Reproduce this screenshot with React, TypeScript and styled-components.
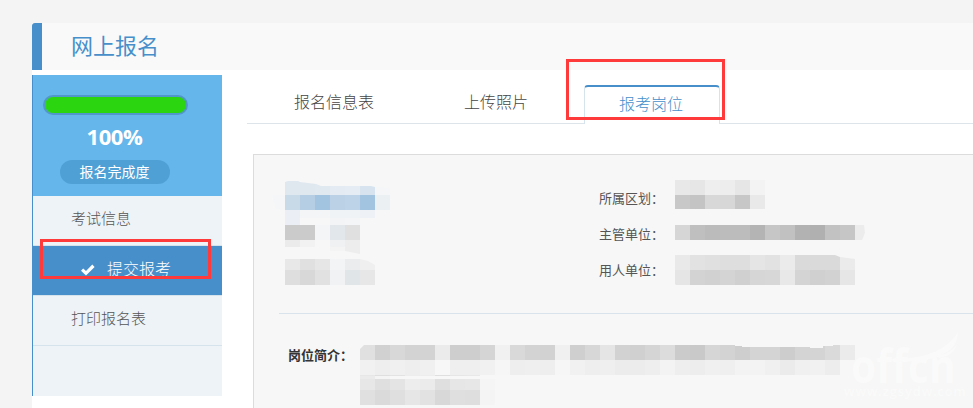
import React from "react";
import styled, { createGlobalStyle, css } from "styled-components";

const Global = createGlobalStyle`
  * { box-sizing: border-box; }
  html, body { margin: 0; background: #f4f4f4; }
  body { overflow: hidden; font-family: "Noto Sans CJK SC", "Liberation Sans", sans-serif; }
`;

const Page = styled.div`
  height: 408px;
  padding: 23px 0 0 32px;
  overflow: hidden;
`;

const Sheet = styled.div`
  height: 385px;
  display: flex;
  flex-direction: column;
  background: #fff;
`;

const Header = styled.header`
  flex: none;
  height: 47px;
  display: flex;
  align-items: center;
  padding: 0 0 5px 29px;
  border-left: 10px solid #478fca;
  border-top-left-radius: 3px;
  background: #f9f9f9;
`;

const Title = styled.h1`
  margin: 0;
  font-size: 22px;
  line-height: 30px;
  font-weight: 400;
  color: #478fca;
`;

const Body = styled.div`
  flex: 1;
  min-height: 0;
  display: flex;
  align-items: flex-start;
  padding-top: 5px;
`;

const Sidebar = styled.aside`
  flex: none;
  width: 190px;
  height: 321px;
  border-left: 1px solid #478fca;
  background: #edf3f7;
`;

const Summary = styled.div`
  height: 121px;
  display: flex;
  flex-direction: column;
  padding: 20px 0 0 10px;
  background: #65b6ea;
`;

const Progress = styled.div`
  width: 145px;
  height: 20px;
  border: 2px solid #5297c9;
  border-radius: 10px;
  background: #2bd610;
`;

const Percent = styled.div`
  width: 143px;
  margin-top: 6px;
  font: 700 22px/30px "Open Sans", sans-serif;
  letter-spacing: -0.4px;
  text-align: center;
  color: #fff;
`;

const Pill = styled.div`
  width: 110px;
  height: 24px;
  margin: 9px 0 0 17px;
  padding-right: 1px;
  border-radius: 12px;
  background: #4fa1d5;
  color: #fff;
  font-size: 14px;
  font-weight: 400;
  line-height: 22px;
  text-align: center;
`;

const MenuItem = styled.div<{ $active?: boolean }>`
  position: relative;
  height: 50px;
  display: flex;
  align-items: center;
  padding: 0 0 7px 38px;
  border-bottom: 1px solid #d5e3ec;
  font-size: 15px;
  font-weight: 300;
  color: #555;
  ${(p) =>
    p.$active &&
    css`
      padding: 0 0 5px 48px;
      gap: 12px;
      background: #478fca;
      color: #fff;
      font-size: 16px;
    `}
`;

const CheckMark = styled.svg`
  margin-top: 3px;
`;

const Marker = styled.div<{ $x: number; $y: number; $w: number; $h: number }>`
  position: absolute;
  left: ${(p) => p.$x}px;
  top: ${(p) => p.$y}px;
  width: ${(p) => p.$w}px;
  height: ${(p) => p.$h}px;
  border: 3px solid #ff3a3a;
  z-index: 2;
`;

const Main = styled.main`
  flex: 1;
  min-width: 0;
  padding: 10px 0 0 25px;
`;

const Tabs = styled.nav`
  height: 39px;
  display: flex;
  gap: 20px;
  padding-left: 11px;
  border-bottom: 1px solid #dde4ea;
`;

const Tab = styled.div<{ $active?: boolean }>`
  position: relative;
  height: 38px;
  padding: 0 36px;
  font-size: 16px;
  font-weight: 300;
  line-height: 33px;
  color: #444;
  & + & { margin-left: -2px; }
  ${(p) =>
    p.$active &&
    css`
      && { margin-left: 0; }
      height: 39px;
      padding: 0 36px 0 34px;
      background: #fff;
      border: 1px solid #d5e3ec;
      border-top: 2px solid #478fca;
      border-bottom: 0;
      border-radius: 4px 4px 0 0;
      color: #478fca;
    `}
`;

const Panel = styled.section`
  position: relative;
  height: 300px;
  margin: 30px 0 0 6px;
  border: 1px solid #dcdcdc;
  border-right: 0;
  background: #f7f7f7;
`;

const Overview = styled.div`
  height: 159px;
  margin-left: 25px;
  padding-top: 25px;
  display: grid;
  grid-template-columns: 320px 1fr;
  align-items: start;
  border-bottom: 1px solid #d9e3eb;
`;

const Summaries = styled.div`
  display: flex;
  flex-direction: column;
  gap: 5px;
  margin-left: -9px;
`;

const Fields = styled.div`
  display: flex;
  flex-direction: column;
`;

const Field = styled.div<{ $h: number }>`
  height: ${(p) => p.$h}px;
  display: flex;
  align-items: flex-start;
`;

const Label = styled.span<{ $w: number; $top: number; $bold?: boolean }>`
  flex: none;
  width: ${(p) => p.$w}px;
  padding-top: ${(p) => p.$top}px;
  font-size: 13px;
  line-height: 18px;
  font-weight: ${(p) => (p.$bold ? 700 : 400)};
  color: ${(p) => (p.$bold ? "#333" : "#555")};
  white-space: nowrap;
`;

const Intro = styled.div`
  display: flex;
  align-items: flex-start;
  padding: 31px 0 0 34px;
`;

const MosaicBox = styled.div<{ $clip?: string }>`
  flex: none;
  display: flex;
  flex-direction: column;
  clip-path: ${(p) => p.$clip ?? "none"};
`;

const MosaicRow = styled.div<{ $h: number }>`
  height: ${(p) => p.$h}px;
  display: flex;
`;

const Cell = styled.i<{ $c: string }>`
  width: 15px;
  background: #${(p) => p.$c};
`;

const Logo = styled.svg`
  position: absolute;
  left: 588px;
  top: 173px;
`;

type Row = [height: number, cells: string];

/* Blocks of 15px hex-coloured tiles; "-" leaves the panel colour. */
function Mosaic({ rows, clip }: { rows: Row[]; clip?: string }) {
  return (
    <MosaicBox $clip={clip}>
      {rows.map(([h, cells], r) => (
        <MosaicRow key={r} $h={h}>
          {cells.split(" ").map((c, i) => (
            <Cell key={i} $c={c === "-" ? "f7f7f7" : c} />
          ))}
        </MosaicRow>
      ))}
    </MosaicBox>
  );
}

const nameRows: Row[] = [
  [15, "- dfe8ef dfe8ef e0e8f0 e5ebf3 e6ecf3 d7e4f0 f4f6f7"],
  [15, "f4f6f8 c8dae8 b5cee4 a2c4e0 bbd1e5 bdd3e8 a2c4e0 ebf0f3"],
  [8, "- ebeff5 f4f5f7 f4f5f7 f0f3f6 f0f3f6 eef2f6 -"],
  [7, "- ebeff5 f7f7f7 f7f7f7 f2f4f6 f3f5f7 f7f7f7 -"],
  [15, "- cbcbcb cbcbcb f3f5f7 e1e7eb e0e0e0 - -"],
  [7, "- ebebeb f2f2f2 - f0f1f3 ededed - -"],
  [7, "- - - - f4f4f5 ededed - -"],
];
const nameClip =
  "polygon(2px 15px,15px 15px,15px 2px,18px 1px,28px 1px,30px 2px,46px 4px,51px 6px,101px 6px,105px 7px,120px 8px,120px 100%,90px 100%,75px 71px,15px 71px,15px 30px,6px 29px)";

const codeRows: Row[] = [
  [11, "- e8e8e8 e0e0e0 e6e6e6 f3f4f5 ebecee efefef"],
  [15, "- dedede d8d8d8 e1e1e1 f1f2f4 e0e5e8 e7e7e7"],
];
const codeClip = "polygon(0 0,90px 0,98px 2px,105px 6px,105px 100%,0 100%)";

const areaRows: Row[] = [
  [15, "e8e8e8 e6e6e6 eeeeee ededed e6e6e6 f3f3f3"],
  [14, "c8c8c8 c4c4c4 d8d8d8 d7d7d7 c7c7c7 e9e9e9"],
];
const deptRows: Row[] = [
  [15, "d6d6d6 bfbfbf bbbbbb bcbcbc bcbcbc b4b4b4 c6c6c6 c1c1c1 b2b2b2 b0b0b0 c2c2c2 c6c6c6 ececec"],
];
const deptClip = "polygon(0 0,189px 0,190px 8px,187px 15px,0 15px)";
const unitRows: Row[] = [
  [15, "e9e9e9 e2e2e2 e0e0e0 dedede dedede e5e5e5 e2e2e2 ebebeb dadada dadada dadada ebebeb"],
  [15, "e5e5e5 d3d3d3 d1d1d1 d4d4d4 d0d0d0 d6d6d6 d7d7d7 e8e8e8 d4d4d4 d0d0d0 d2d2d2 e6e6e6"],
];
const unitClip = "polygon(0 0,160px 0,165px 2px,180px 4px,180px 100%,1px 100%,0 29px)";

const introRows: Row[] = [
  [15, "e0e0e0 d1d1d1 d8d8d8 d3d3d3 d3d3d3 ebebeb cecece cecece d5d5d5 f1f1f1 d9d9d9 d3d3d3 d2d2d2 f0f0f0 cfcfcf d7d7d7 e5e5e5 d2d2d2 d0d0d0 d5d5d5 dcdcdc cbcbcb c9c9c9 d6d6d6 d3d3d3 cecece d4d4d4 d4d4d4 cdcdcd d4d4d4 d4d4d4 dadada ebebeb"],
  [15, "f1f1f1 eeeeee f0f0f0 eeeeee f0f0f0 f7f7f7 efefef efefef f1f1f1 f6f6f6 eeeeee efefef eeeeee f6f6f6 f1f1f1 eeeeee efefef ececec ececec eeeeee f3f3f3 eeeeee ededed f0f0f0 efefef f3f3f3 f3f3f3 f0f0f0 ebebeb f0f0f0 f1f1f1 ededed -"],
  [1, "e7e7e7 dfdfdf e3e3e3 ededed ededed dfdfdf e6e6e6 e8e8e8"],
  [3, "ebebeb f4f4f4 - - - - - -"],
  [11, "e7e7e7 dfdfdf e4e4e4 ededed ebebeb dfdfdf e6e6e6 e7e7e7 f5f5f5"],
  [15, "e0e0e0 dadada dfdfdf e6e6e6 e2e2e2 d8d8d8 dfdfdf dedede f4f4f4"],
];
const introClip =
  "polygon(0 4px,4px 0,375px 0,375px 1px,382px 1px,382px 2px,450px 2px,450px 3px,463px 3px,463px 1px,473px 1px,473px 0,100% 0,100% 100%,0 100%)";

export default function App() {
  return (
    <Page lang="zh-CN">
      <Global />
      <Sheet>
        <Header>
          <Title>网上报名</Title>
        </Header>
        <Body>
          <Sidebar>
            <Summary>
              <Progress />
              <Percent>100%</Percent>
              <Pill>报名完成度</Pill>
            </Summary>
            <MenuItem>考试信息</MenuItem>
            <MenuItem $active>
              <CheckMark width="14" height="12" viewBox="0 0 14 12">
                <path d="M0 6.7 2.2 4.4 5 7.1 11.3.6 13.6 2.9 5 11.6Z" fill="#fff" />
              </CheckMark>
              提交报考
              <Marker $x={7} $y={-7} $w={171} $h={40} />
            </MenuItem>
            <MenuItem>打印报名表</MenuItem>
          </Sidebar>
          <Main>
            <Tabs>
              <Tab>报名信息表</Tab>
              <Tab>上传照片</Tab>
              <Tab $active>
                报考岗位
                <Marker $x={-19} $y={-28} $w={159} $h={61} />
              </Tab>
            </Tabs>
            <Panel>
              <Overview>
                <Summaries>
                  <Mosaic rows={nameRows} clip={nameClip} />
                  <Mosaic rows={codeRows} clip={codeClip} />
                </Summaries>
                <Fields>
                  <Field $h={45}>
                    <Label $w={76} $top={9}>所属区划：</Label>
                    <Mosaic rows={areaRows} />
                  </Field>
                  <Field $h={30}>
                    <Label $w={76} $top={0}>主管单位：</Label>
                    <Mosaic rows={deptRows} clip={deptClip} />
                  </Field>
                  <Field $h={30}>
                    <Label $w={76} $top={6}>用人单位：</Label>
                    <Mosaic rows={unitRows} clip={unitClip} />
                  </Field>
                </Fields>
              </Overview>
              <Intro>
                <Label $w={72} $top={1} $bold>岗位简介：</Label>
                <Mosaic rows={introRows} clip={introClip} />
              </Intro>
              <Logo width="131" height="76" viewBox="0 0 131 76" fill="#fafafa">
                <text x="9" y="55" fontFamily="Open Sans" fontWeight="700" fontSize="46" textLength="105" lengthAdjust="spacingAndGlyphs">offcn</text>
                <path d="M34 30C66 34 102 28 116 4C115 16 111 21 103 25C84 36 56 35 34 30Z" />
                <path d="M92 28Q107 27 115 17Q111 28 98 30Z" />
                <text x="2" y="68" fontFamily="Open Sans" fontWeight="600" fontSize="13" textLength="122">www.zgsydw.com</text>
              </Logo>
            </Panel>
          </Main>
        </Body>
      </Sheet>
    </Page>
  );
}
